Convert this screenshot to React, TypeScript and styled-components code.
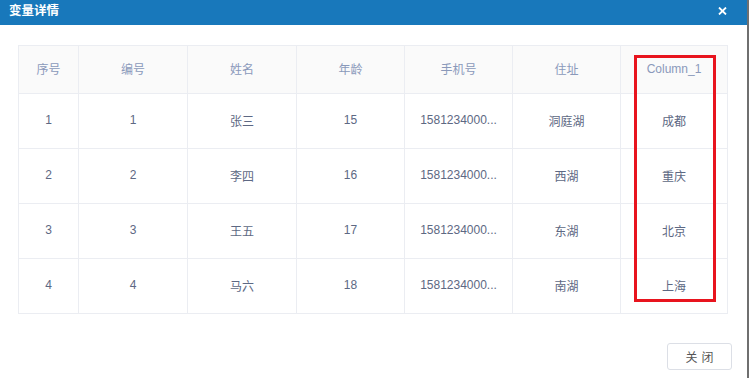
import React from "react";
import styled, { createGlobalStyle } from "styled-components";

const Global = createGlobalStyle`
  html, body { margin: 0; padding: 0; }
  body {
    background: #6f6f6f;
    font-family: "Liberation Sans", "Noto Sans CJK SC", sans-serif;
  }
`;

const Dialog = styled.div`
  width: 747px;
  height: 378px;
  background: #fff;
  display: flex;
  flex-direction: column;
  overflow: hidden;
`;

const Header = styled.div`
  height: 25px;
  background: #1878bb;
  display: flex;
  align-items: flex-start;
  justify-content: space-between;
  padding: 1px 20px 0 9px;
  box-sizing: border-box;
`;

const Title = styled.div`
  color: #fff;
  font-size: 12.5px;
  font-weight: bold;
  line-height: 18px;
  font-family: "Noto Sans CJK SC", sans-serif;
`;

const CloseBtn = styled.div`
  margin-top: 6px;
  width: 9px;
  height: 8px;
  display: flex;
`;

const Body = styled.div`
  padding: 20px 19px 0 18px;
`;

const TableWrap = styled.div`
  position: relative;
`;

const Table = styled.table`
  width: 710px;
  border-collapse: collapse;
  table-layout: fixed;
  border: 1px solid #e8eaf0;
`;

const Th = styled.th<{ $w?: number }>`
  ${(p) => (p.$w ? `width: ${p.$w}px;` : "")}
  height: 45px;
  background: #fafafa;
  border: 1px solid #ebedf2;
  color: #8a99ba;
  font-size: 12px;
  font-weight: normal;
  text-align: center;
  padding: 0 0 2px 0;
`;

const Td = styled.td`
  height: 52px;
  border: 1px solid #ebedf2;
  color: #5d6883;
  font-size: 12px;
  text-align: center;
  padding: 0 0 2px 0;
  white-space: nowrap;
  overflow: hidden;
`;

const Highlight = styled.div`
  position: absolute;
  left: 616px;
  top: 10px;
  width: 82px;
  height: 247px;
  border: 3px solid #e8141e;
  box-sizing: border-box;
  pointer-events: none;
`;

const Footer = styled.div`
  display: flex;
  justify-content: flex-end;
  padding: 29px 15px 0 0;
`;

const Button = styled.button`
  width: 65px;
  height: 27px;
  background: #fff;
  border: 1px solid #dcdfe6;
  border-radius: 3px;
  color: #555;
  font-size: 12px;
  font-family: "Noto Sans CJK SC", sans-serif;
  letter-spacing: 4px;
  padding: 0 0 0 4px;
`;

const columns = [
  { title: "序号", w: 59 },
  { title: "编号", w: 108 },
  { title: "姓名", w: 108 },
  { title: "年龄", w: 107 },
  { title: "手机号", w: 107 },
  { title: "住址", w: 107 },
  { title: "Column_1" },
];

const rows = [
  ["1", "1", "张三", "15", "1581234000...", "洞庭湖", "成都"],
  ["2", "2", "李四", "16", "1581234000...", "西湖", "重庆"],
  ["3", "3", "王五", "17", "1581234000...", "东湖", "北京"],
  ["4", "4", "马六", "18", "1581234000...", "南湖", "上海"],
];

export default function App() {
  return (
    <>
      <Global />
      <Dialog>
        <Header>
          <Title>变量详情</Title>
          <CloseBtn>
            <svg width="9" height="8" viewBox="0 0 9 8">
              <path d="M1 0.5 L8 7.5 M8 0.5 L1 7.5" stroke="#fff" strokeWidth="1.8" />
            </svg>
          </CloseBtn>
        </Header>
        <Body>
          <TableWrap>
            <Table>
              <thead>
                <tr>
                  {columns.map((c) => (
                    <Th key={c.title} $w={c.w}>
                      {c.title}
                    </Th>
                  ))}
                </tr>
              </thead>
              <tbody>
                {rows.map((r, i) => (
                  <tr key={i}>
                    {r.map((v, j) => (
                      <Td key={j}>{v}</Td>
                    ))}
                  </tr>
                ))}
              </tbody>
            </Table>
            <Highlight />
          </TableWrap>
        </Body>
        <Footer>
          <Button>关闭</Button>
        </Footer>
      </Dialog>
    </>
  );
}
